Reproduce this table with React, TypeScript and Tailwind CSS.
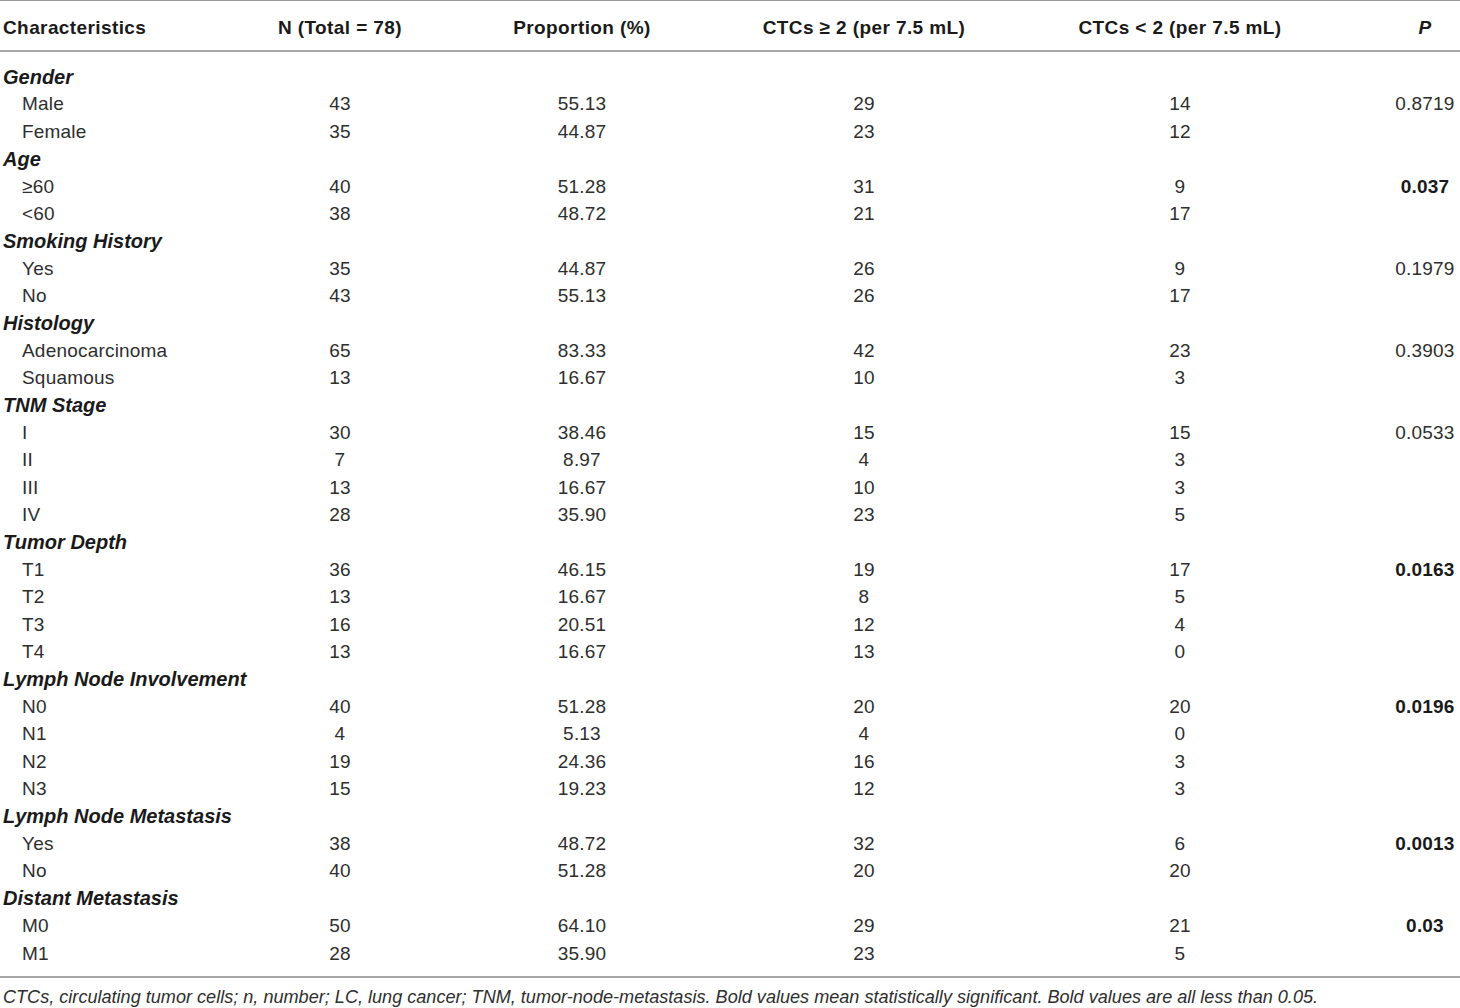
import React from "react";

type Row = {
  label: string;
  n?: string;
  prop?: string;
  hi?: string;
  lo?: string;
  p?: string;
  bold?: boolean;
  group?: boolean;
};

const rows: Row[] = [
  { label: "Gender", group: true },
  { label: "Male", n: "43", prop: "55.13", hi: "29", lo: "14", p: "0.8719" },
  { label: "Female", n: "35", prop: "44.87", hi: "23", lo: "12" },
  { label: "Age", group: true },
  { label: "≥60", n: "40", prop: "51.28", hi: "31", lo: "9", p: "0.037", bold: true },
  { label: "<60", n: "38", prop: "48.72", hi: "21", lo: "17" },
  { label: "Smoking History", group: true },
  { label: "Yes", n: "35", prop: "44.87", hi: "26", lo: "9", p: "0.1979" },
  { label: "No", n: "43", prop: "55.13", hi: "26", lo: "17" },
  { label: "Histology", group: true },
  { label: "Adenocarcinoma", n: "65", prop: "83.33", hi: "42", lo: "23", p: "0.3903" },
  { label: "Squamous", n: "13", prop: "16.67", hi: "10", lo: "3" },
  { label: "TNM Stage", group: true },
  { label: "I", n: "30", prop: "38.46", hi: "15", lo: "15", p: "0.0533" },
  { label: "II", n: "7", prop: "8.97", hi: "4", lo: "3" },
  { label: "III", n: "13", prop: "16.67", hi: "10", lo: "3" },
  { label: "IV", n: "28", prop: "35.90", hi: "23", lo: "5" },
  { label: "Tumor Depth", group: true },
  { label: "T1", n: "36", prop: "46.15", hi: "19", lo: "17", p: "0.0163", bold: true },
  { label: "T2", n: "13", prop: "16.67", hi: "8", lo: "5" },
  { label: "T3", n: "16", prop: "20.51", hi: "12", lo: "4" },
  { label: "T4", n: "13", prop: "16.67", hi: "13", lo: "0" },
  { label: "Lymph Node Involvement", group: true },
  { label: "N0", n: "40", prop: "51.28", hi: "20", lo: "20", p: "0.0196", bold: true },
  { label: "N1", n: "4", prop: "5.13", hi: "4", lo: "0" },
  { label: "N2", n: "19", prop: "24.36", hi: "16", lo: "3" },
  { label: "N3", n: "15", prop: "19.23", hi: "12", lo: "3" },
  { label: "Lymph Node Metastasis", group: true },
  { label: "Yes", n: "38", prop: "48.72", hi: "32", lo: "6", p: "0.0013", bold: true },
  { label: "No", n: "40", prop: "51.28", hi: "20", lo: "20" },
  { label: "Distant Metastasis", group: true },
  { label: "M0", n: "50", prop: "64.10", hi: "29", lo: "21", p: "0.03", bold: true },
  { label: "M1", n: "28", prop: "35.90", hi: "23", lo: "5" },
];

const grid = "grid grid-cols-[220px_240px_244px_320px_312px_124px] items-center";

export default function App() {
  return (
    <div className="w-[1460px] h-[1008px] bg-white text-[#1f1f1f] font-['Liberation_Sans',Arial,sans-serif] overflow-hidden">
      <div className="border-t border-[#9a9a9a]" />
      {/* header */}
      <div className={`${grid} h-[51px] pt-[5px] font-bold text-[19px] tracking-[0.4px] text-[#1a1a1a] border-b-2 border-[#a8a8a8]`}>
        <div className="pl-[3px]">Characteristics</div>
        <div className="text-center">N (Total = 78)</div>
        <div className="text-center">Proportion (%)</div>
        <div className="text-center">CTCs ≥ 2 (per 7.5 mL)</div>
        <div className="text-center">CTCs &lt; 2 (per 7.5 mL)</div>
        <div className="pl-[54px] text-center italic">P</div>
      </div>
      {/* body */}
      <div className="pt-[11px] pb-[9px] border-b-2 border-[#a8a8a8]">
        {rows.map((r, i) =>
          r.group ? (
            <div key={i} className="h-[27.4px] flex items-center pl-[3px] font-bold italic text-[20px] text-[#1a1a1a]">
              {r.label}
            </div>
          ) : (
            <div key={i} className={`${grid} h-[27.4px] text-[19px] tracking-[0.2px] text-[#2e2e2e]`}>
              <div className="pl-[22px]">{r.label}</div>
              <div className="text-center">{r.n}</div>
              <div className="text-center">{r.prop}</div>
              <div className="text-center">{r.hi}</div>
              <div className="text-center">{r.lo}</div>
              <div className={`pl-[54px] text-center ${r.bold ? "font-bold text-[#1a1a1a]" : ""}`}>{r.p}</div>
            </div>
          )
        )}
      </div>
      <p className="pl-[3px] pt-[6px] italic text-[18.1px] text-[#2e2e2e]">
        CTCs, circulating tumor cells; n, number; LC, lung cancer; TNM, tumor-node-metastasis. Bold values mean statistically significant. Bold values are all less than 0.05.
      </p>
    </div>
  );
}
